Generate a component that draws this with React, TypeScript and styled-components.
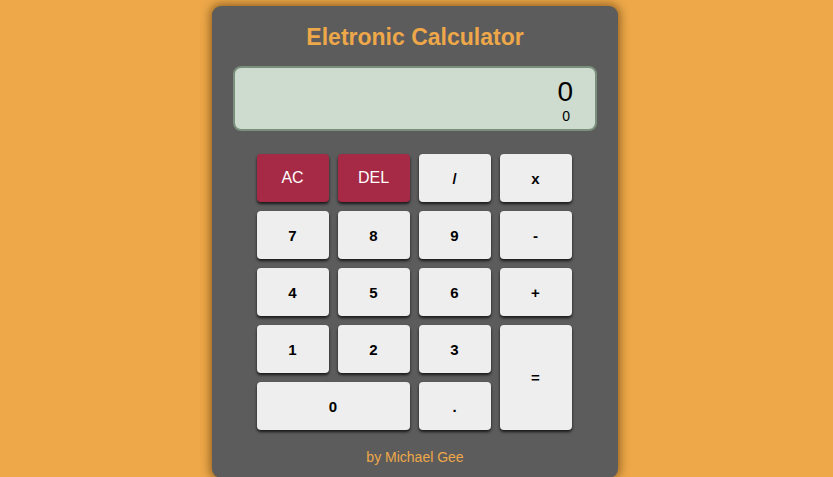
import React from "react";
import styled, { createGlobalStyle } from "styled-components";

const Global = createGlobalStyle`
  html, body { margin: 0; padding: 0; }
  body {
    background: #eea849;
    font-family: "Liberation Sans", Arial, sans-serif;
    overflow: hidden;
  }
`;

const Page = styled.div`
  display: flex;
  justify-content: center;
  padding-top: 6px;
  padding-right: 3px;
`;

const Panel = styled.div`
  width: 406px;
  height: 472px;
  box-sizing: border-box;
  background: #5c5c5c;
  border-radius: 9px;
  box-shadow: 0 0 10px 2px rgba(70, 40, 0, 0.55);
  padding: 0 21px;
  display: flex;
  flex-direction: column;
  align-items: center;
`;

const Title = styled.h1`
  margin: 0;
  height: 60px;
  line-height: 62px;
  font-size: 23px;
  font-weight: bold;
  color: #eea849;
  text-align: center;
`;

const Display = styled.div`
  width: 364px;
  height: 65px;
  box-sizing: border-box;
  background: #cddccf;
  border: 2px solid #7b8f7d;
  border-radius: 8px;
  display: flex;
  flex-direction: column;
  align-items: flex-end;
  padding: 8px 22px 0 0;
`;

const Main = styled.div`
  font-size: 28px;
  line-height: 32px;
  color: #000;
  margin-right: 0;
`;

const Sub = styled.div`
  font-size: 14px;
  line-height: 16px;
  color: #000;
  margin-right: 3px;
`;

const Keys = styled.div`
  margin-top: 23px;
  margin-right: 2px;
  display: grid;
  grid-template-columns: repeat(4, 72px);
  grid-auto-rows: 48px;
  gap: 9px;
`;

const Key = styled.button<{ $danger?: boolean; $wide?: boolean; $tall?: boolean }>`
  border: none;
  border-radius: 4px;
  font-family: "Liberation Sans", Arial, sans-serif;
  font-size: ${(p) => (p.$danger ? "16px" : "15px")};
  font-weight: ${(p) => (p.$danger ? "normal" : "bold")};
  background: ${(p) => (p.$danger ? "#a62a45" : "#eeeeee")};
  color: ${(p) => (p.$danger ? "#ffffff" : "#000000")};
  box-shadow: 0 2px 3px rgba(0, 0, 0, 0.75);
  padding: 0;
  cursor: pointer;
  grid-column: ${(p) => (p.$wide ? "span 2" : "auto")};
  grid-row: ${(p) => (p.$tall ? "span 2" : "auto")};
`;

const Footer = styled.div`
  margin-top: 19px;
  font-size: 14px;
  color: #eea849;
`;

export default function App() {
  return (
    <>
      <Global />
      <Page>
        <Panel>
          <Title>Eletronic Calculator</Title>
          <Display>
            <Main>0</Main>
            <Sub>0</Sub>
          </Display>
          <Keys>
            <Key $danger>AC</Key>
            <Key $danger>DEL</Key>
            <Key>/</Key>
            <Key>x</Key>
            <Key>7</Key>
            <Key>8</Key>
            <Key>9</Key>
            <Key>-</Key>
            <Key>4</Key>
            <Key>5</Key>
            <Key>6</Key>
            <Key>+</Key>
            <Key>1</Key>
            <Key>2</Key>
            <Key>3</Key>
            <Key $tall>=</Key>
            <Key $wide>0</Key>
            <Key>.</Key>
          </Keys>
          <Footer>by Michael Gee</Footer>
        </Panel>
      </Page>
    </>
  );
}
